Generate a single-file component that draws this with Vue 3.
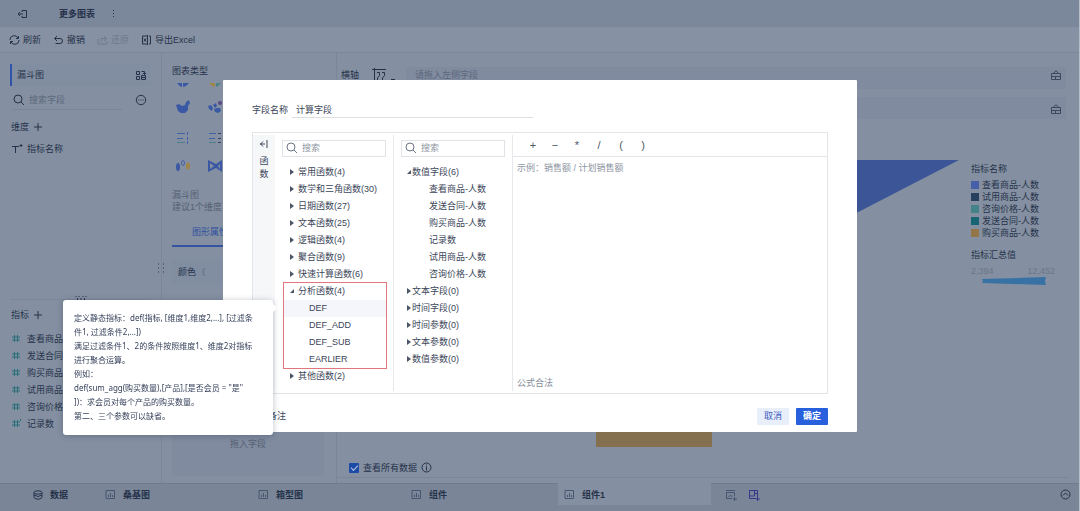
<script setup>
import { ref } from 'vue'

const metrics = ['查看商品', '发送合同-', '购买商品', '试用商品', '咨询价格', '记录数']
const groupsBefore = ['常用函数(4)', '数学和三角函数(30)', '日期函数(27)', '文本函数(25)', '逻辑函数(4)', '聚合函数(9)', '快速计算函数(6)']
const analysis = ['DEF', 'DEF_ADD', 'DEF_SUB', 'EARLIER']
const numberFields = ['查看商品-人数', '发送合同-人数', '购买商品-人数', '记录数', '试用商品-人数', '咨询价格-人数']
const fieldGroups = ['文本字段(0)', '时间字段(0)', '时间参数(0)', '文本参数(0)', '数值参数(0)']
const operators = ['+', '−', '*', '/', '(', ')']
const tabs = [
  { name: '桑基图' },
  { name: '箱型图' },
  { name: '组件' },
  { name: '组件1', active: true }
]
const legend = [
  { name: '查看商品-人数', tone: 'blue' },
  { name: '试用商品-人数', tone: 'navy' },
  { name: '咨询价格-人数', tone: 'teal' },
  { name: '发送合同-人数', tone: 'green' },
  { name: '购买商品-人数', tone: 'gold' }
]
const tipLines = [
  '定义静态指标：def(指标, [维度1,维度2,...], [过滤条',
  '件1, 过滤条件2,...])',
  '满足过滤条件1、2的条件按照维度1、维度2对指标',
  '进行聚合运算。',
  '例如：',
  'def(sum_agg(购买数量),[产品],[是否会员 = "是"',
  '])：求会员对每个产品的购买数量。',
  '第二、三个参数可以缺省。'
]
const fieldName = ref('计算字段')
const showAll = ref(true)
</script>

<template>
  <div class="app">
    <header class="titlebar">
      <button class="icon-btn" aria-label="返回">
        <svg width="11" height="10" viewBox="0 0 11 10"><path d="M5 3V1.500h4.500v7H5V7M1 5h5M3 3L1 5l2 2" /></svg>
      </button>
      <h1>更多图表</h1>
      <button class="icon-btn" aria-label="更多">
        <svg class="solid" width="3" height="10" viewBox="0 0 3 10"><rect x="1" y="1" width="1" height="1" /><rect x="1" y="4" width="1" height="1" /><rect x="1" y="7" width="1" height="1" /></svg>
      </button>
    </header>

    <nav class="toolbar">
      <button>
        <svg width="11" height="10" viewBox="0 0 11 10"><path d="M1 5a4.2 4 0 0 1 8-2M9.500 1v2.500H7M10 5a4.200 4 0 0 1-8 2M1.500 9V6.500H4" /></svg>刷新
      </button>
      <button>
        <svg width="11" height="10" viewBox="0 0 11 10"><path d="M4 1L1.500 3.500 4 6M1.500 3.500H7a2.500 2.500 0 0 1 0 5H2.500" /></svg>撤销
      </button>
      <button class="faded" disabled>
        <svg width="11" height="10" viewBox="0 0 11 10"><path d="M7 1l2.500 2.500L7 6M9.500 3.500H4v3M1 4v5h9V6" /></svg>还原
      </button>
      <button>
        <svg width="11" height="10" viewBox="0 0 11 10"><path d="M6 1H1.500v8H6M8 1h1.500v8H8M6.500 0v10M3 3.500l2 3M5 3.500l-2 3" /></svg>导出Excel
      </button>
    </nav>

    <main class="workspace">
      <aside class="fields">
        <div class="selected">
          <span>漏斗图</span>
          <svg width="10" height="10" viewBox="0 0 10 10"><path d="M.500 1.500h3v3h-3zM.500 6.500h3v3h-3zM5.500 5.500h4v4h-4zM5.500 1.500h3v3M7 3l1.500 1.500L10 3M5.500 7.500h4" /></svg>
        </div>
        <div class="find">
          <label>
            <svg width="12" height="12" viewBox="0 0 12 12"><circle cx="5" cy="5" r="4" /><path d="M8 8l3 3" /></svg>
            <input type="text" placeholder="搜索字段" aria-label="搜索字段" />
          </label>
          <button class="icon-btn" aria-label="更多选项">
            <svg width="12" height="12" viewBox="0 0 12 12"><circle cx="6" cy="6" r="4.700" /><path d="M3.300 6h1M5.500 6h1M7.700 6h1" /></svg>
          </button>
        </div>
        <h2>维度 <svg width="8" height="8" viewBox="0 0 8 8"><path d="M4 0v8M0 4h8" /></svg></h2>
        <div class="dimension">
          <svg width="12" height="10" viewBox="0 0 12 10"><path d="M0 2.500h7M3.500 2.500V9" /><path d="M9 0v3M7.500 1.500h3" /></svg>指标名称
        </div>
        <div class="splitter"><svg width="12" height="4" viewBox="0 0 12 4"><path d="M1 0v1M4 0v1M8 0v1M11 0v1M2.500 2v2M6 2v2M9.500 2v2" /></svg></div>
        <h2>指标 <svg width="8" height="8" viewBox="0 0 8 8"><path d="M4 0v8M0 4h8" /></svg></h2>
        <ul class="metrics">
          <li v-for="(m, i) in metrics" :key="m">
            <svg width="9" height="9" viewBox="0 0 9 9"><path d="M2.500 1v7M5.500 1v7M0 3h8M0 6h8" /><path v-if="i === 5" d="M8.500 0v2" /></svg>{{ m }}
          </li>
        </ul>
      </aside>

      <section class="settings">
        <svg class="grip" width="7" height="11" viewBox="0 0 7 11"><path d="M0 1h1M5 1h1M0 5h1M5 5h1M0 9h1M5 9h1" /></svg>
        <h2>图表类型</h2>
        <div class="types">
          <svg width="14" height="6" viewBox="0 0 14 6"><path class="f-blue" d="M1 1h5v4Q3 4 1 1zM7 1h6Q11 4 7 5z" /></svg>
          <svg width="14" height="6" viewBox="0 0 14 6"><path class="f-gold" d="M1 1h6v4Q3 4 1 1z" /><path class="f-teal" d="M8 1h5Q11 4 8 5z" /></svg>
          <svg width="16" height="14" viewBox="0 0 16 14"><path class="f-blue" d="M0 5l3-1 3 2 3-1 1-3 3-2 1 3-2 3 0 4-3 3-4 0-3-2z" /></svg>
          <svg width="16" height="14" viewBox="0 0 16 14"><path class="f-blue" d="M0 6l3-1 2 3-1 3-3-2zM5 5l3-2 1 3-2 2zM6 9l3-1 3 0 1 3-3 2-3-1z" /><circle class="f-purple" cx="12" cy="3" r="2" /></svg>
          <svg width="14" height="14" viewBox="0 0 14 14"><path class="s-blue" d="M1 2.500h8M1 7.500h6" /><path class="s-teal" d="M1 11.500h8" /><path class="s-blue" d="M11.500 1v3M11.500 6v3M11.500 10v3" /></svg>
          <svg width="14" height="14" viewBox="0 0 14 14"><path class="s-blue" d="M1 2.500h7M1 7.500h6" /><path class="s-teal" d="M1 11.500h7" /><path class="s-navy" d="M10 2.500h3M10 7.500h3M10 11.500h3" /></svg>
          <svg width="14" height="14" viewBox="0 0 14 14"><ellipse class="f-blue" cx="2" cy="8" rx="2" ry="4" /><ellipse class="s-blue" cx="7" cy="4" rx="1.500" ry="2.500" /><ellipse class="f-gold" cx="12" cy="7" rx="2" ry="3.500" /></svg>
          <svg width="16" height="12" viewBox="0 0 16 12"><path class="f-blue" fill-rule="evenodd" d="M0 0l8 4 6-4v12L8 8l-8 4zM2 3v6l4-3zM12 4l-2 2 2 3z" /></svg>
        </div>
        <p class="hint">漏斗图<br />建议1个维度、</p>
        <button class="tab-attr">图形属性</button>
        <div class="color-row"><span>颜色</span><svg width="6" height="8" viewBox="0 0 6 8"><path d="M4.500 1H2v6h2.500M2 4h2" /></svg><i></i></div>
        <div class="drop">拖入字段</div>
      </section>

      <section class="canvas">
        <div class="axis">
          <span class="axis-name">横轴</span>
          <svg width="24" height="14" viewBox="0 0 24 14"><path d="M0 1.500h14M2.500 0v13M5 4.500h2.500v3L5.500 10v3M10 4.500h2.500v3l-2 2.500v3" /><path d="M19 11.500h4" /></svg>
          <div class="field-box">请拖入左侧字段
            <svg width="10" height="10" viewBox="0 0 10 10"><path d="M.500 3.500h9v6h-9zM2.500 3.500q2.500-5 5 0M1 6.500h8M4.500 6v3" /></svg>
          </div>
        </div>
        <div class="axis">
          <span class="axis-name"></span>
          <div class="field-box second">
            <svg width="10" height="10" viewBox="0 0 10 10"><path d="M.500 3.500h9v6h-9zM2.500 3.500q2.500-5 5 0M1 6.500h8M4.500 6v3" /></svg>
          </div>
        </div>
        <div class="chart">
          <svg class="funnel" viewBox="0 0 622 331" preserveAspectRatio="none">
            <path class="top" d="M12 33H622L500 96H134z" />
            <path class="base" d="M259 280H375V320H259z" />
          </svg>
          <div class="legend">
            <h3>指标名称</h3>
            <ul>
              <li v-for="l in legend" :key="l.name"><i :class="l.tone"></i>{{ l.name }}</li>
            </ul>
            <h3>指标汇总值</h3>
            <div class="range"><span>2,394</span><span>12,452</span></div>
            <svg width="66" height="8" viewBox="0 0 66 8"><path d="M1 2L65 0l-1 4 1 4L1 6l1-2z" /></svg>
          </div>
        </div>
        <label class="all-data">
          <input v-model="showAll" type="checkbox" />查看所有数据
          <svg width="11" height="11" viewBox="0 0 11 11"><circle cx="5.500" cy="5.500" r="4.500" /><path d="M5.500 2.500v1M5.500 4.500v4" /></svg>
        </label>
      </section>
    </main>

    <footer class="tabbar">
      <button class="data-tab">
        <svg width="10" height="10" viewBox="0 0 10 10"><ellipse cx="5" cy="2.500" rx="4" ry="1.700" /><path d="M1 2.500v5q4 3.500 8 0v-5M1 5q4 3 8 0" /></svg>数据
      </button>
      <button v-for="t in tabs" :key="t.name" class="sheet" :class="{ active: t.active }">
        <svg width="11" height="11" viewBox="0 0 11 11"><path d="M1 1.500h8.500v8H1zM3.500 8V6M5.500 8V4M7.500 8V6" /></svg>{{ t.name }}
      </button>
      <button class="add" aria-label="添加组件">
        <svg width="12" height="12" viewBox="0 0 12 12"><path d="M1 1.500h9M1 3.500h8.500V7M1.500 3.500v6H7M3.500 8l2-2 2 2M9.500 8v4M8 10h4" /></svg>
      </button>
      <button class="add violet" aria-label="添加仪表板">
        <svg width="12" height="12" viewBox="0 0 12 12"><path d="M1 1.500h8.500V8M1.500 1v8.500H8M6.500 1v6H1M6.500 4.500h3M9.500 8v4M8 10h4" /></svg>
      </button>
      <button class="collapse" aria-label="收起">
        <svg width="11" height="11" viewBox="0 0 11 11"><circle cx="5.500" cy="5.500" r="4.500" /><path d="M3 6.500L5.500 4 8 6.500" /></svg>
      </button>
    </footer>

    <div class="layer">
      <div class="dialog" role="dialog" aria-label="计算字段">
        <div class="name-row">
          <label for="field-name">字段名称</label>
          <input id="field-name" v-model="fieldName" type="text" />
        </div>
        <div class="builder">
          <div class="strip">
            <svg width="8" height="8" viewBox="0 0 8 8"><path d="M0 4h5M3 1.500L.500 4 3 6.500M7 0v8" /></svg>
            <span>函</span><span>数</span>
          </div>
          <div class="column">
            <label class="search">
              <svg width="12" height="12" viewBox="0 0 12 12"><circle cx="5" cy="5" r="4" /><path d="M8 8l3 3" /></svg>
              <input type="text" placeholder="搜索" aria-label="搜索函数" />
            </label>
            <ul class="tree">
              <li v-for="g in groupsBefore" :key="g"><i class="arrow"></i>{{ g }}</li>
            </ul>
            <div class="marked">
              <ul class="tree">
                <li><i class="arrow open"></i>分析函数(4)</li>
                <li v-for="(a, i) in analysis" :key="a" class="leaf" :class="{ hover: i === 0 }">
                  {{ a }}
                  <div v-if="i === 0" class="tip" role="tooltip">
                    <p v-for="line in tipLines" :key="line">{{ line }}</p>
                  </div>
                </li>
              </ul>
            </div>
            <ul class="tree">
              <li><i class="arrow"></i>其他函数(2)</li>
            </ul>
          </div>
          <div class="column fields-col">
            <label class="search">
              <svg width="12" height="12" viewBox="0 0 12 12"><circle cx="5" cy="5" r="4" /><path d="M8 8l3 3" /></svg>
              <input type="text" placeholder="搜索" aria-label="搜索字段名" />
            </label>
            <ul class="tree">
              <li><i class="arrow open"></i>数值字段(6)</li>
              <li v-for="n in numberFields" :key="n" class="leaf">{{ n }}</li>
              <li v-for="f in fieldGroups" :key="f"><i class="arrow"></i>{{ f }}</li>
            </ul>
          </div>
          <div class="editor">
            <div class="ops"><button v-for="o in operators" :key="o">{{ o }}</button></div>
            <textarea placeholder="示例：销售额 / 计划销售额" aria-label="公式"></textarea>
            <p>公式合法</p>
          </div>
        </div>
        <div class="actions">
          <span>备注</span>
          <button class="cancel">取消</button>
          <button class="ok">确定</button>
        </div>
      </div>
    </div>
  </div>
</template>

<style>
body { margin: 0; }
</style>

<style scoped>
.app {
  display: flex;
  flex-direction: column;
  height: 100vh;
  box-sizing: border-box;
  border-right: 1px solid #b4bdc9;
  background: #8490a1;
  color: #26324a;
  font: 9px/12px "Liberation Sans", "Noto Sans CJK SC", sans-serif;
  overflow: hidden;
}
.app * { box-sizing: border-box; }
button, input, textarea { font: inherit; color: inherit; border: 0; background: none; padding: 0; margin: 0; outline: 0; border-radius: 0; }
button { display: flex; align-items: center; }
h1, h2, h3, p, ul { margin: 0; padding: 0; font-size: inherit; font-weight: 400; list-style: none; }
svg { display: block; flex: none; fill: none; stroke: currentColor; stroke-width: 1; }
input { min-width: 0; }
.solid { fill: currentColor; stroke: none; }

.titlebar { display: flex; align-items: center; height: 27px; padding-left: 17px; background: #7b879a; flex: none; }
.titlebar h1 { margin: 0 17px 0 31px; font-weight: 700; }
.toolbar { display: flex; align-items: center; gap: 12px; height: 26px; padding: 1px 0 0 9px; flex: none; border-bottom: 1px solid #7c889a; background: #8691a3; }
.toolbar button { gap: 3px; }
.toolbar .faded { color: #6e7a8d; }

.workspace { display: flex; flex: 1; min-height: 0; }
.fields { width: 162px; flex: none; padding: 11px 10px 0; border-right: 1px solid #7b8799; }
.selected { display: flex; align-items: center; justify-content: space-between; height: 22px; padding: 0 5px; border-left: 2px solid #2f53a8; background: #818da0; }
.find { display: flex; align-items: center; justify-content: space-between; height: 24px; padding: 0 4px 0 3px; margin-top: 2px; }
.find label { display: flex; align-items: center; gap: 4px; width: 109px; height: 20px; border-bottom: 1px solid #7a8698; }
.find input { width: 80px; }
.find input::placeholder { color: #5c687c; opacity: 1; }
.fields h2 { display: flex; align-items: center; gap: 5px; height: 14px; margin: 8px 0 0 1px; }
.dimension { display: flex; align-items: center; gap: 3px; height: 14px; margin: 8px 0 0 2px; }
.splitter { display: flex; justify-content: center; height: 4px; margin-top: 140px; border-bottom: 1px solid #7b8799; }
.metrics { margin-top: 8px; }
.metrics li { display: flex; align-items: center; gap: 6px; height: 17px; padding-left: 2px; }
.metrics svg { color: #2a6e78; }

.settings { position: relative; display: flex; flex-direction: column; width: 175px; flex: none; padding: 12px 12px 7px 10px; border-right: 1px solid #7b8799; }
.grip { position: absolute; left: -4px; top: 210px; }
.types { display: grid; grid-template-columns: 32px 32px; grid-template-rows: 10px 34px 28px 28px; align-items: center; padding-left: 4px; margin-top: 3px; }
.f-blue { fill: #3a58a4; stroke: none; }
.f-teal { fill: #4a8585; stroke: none; }
.f-gold { fill: #a08548; stroke: none; }
.f-purple { fill: #574a80; stroke: none; }
.s-blue { stroke: #4561a6; }
.s-teal { stroke: #4d7f8b; }
.s-navy { stroke: #34436b; }
.hint { margin-top: 9px; color: #566175; white-space: nowrap; }
.tab-attr { height: 28px; margin-top: 6px; padding-left: 20px; color: #2f4f9f; border-bottom: 2px solid #3553a3; }
.color-row { display: flex; align-items: center; gap: 5px; height: 24px; margin-top: 13px; padding-left: 6px; background: #818da0; }
.color-row svg { color: #68748a; }
.color-row i { width: 2px; height: 13px; margin-left: 14px; background: #4f6595; }
.drop { display: flex; flex: 1; align-items: flex-end; justify-content: center; margin-top: 120px; padding-bottom: 26px; background: #808b9f; color: #566175; }

.canvas { display: flex; flex: 1; flex-direction: column; min-width: 0; padding: 14px 10px 5px 0; }
.axis { display: flex; height: 22px; margin-bottom: 8px; padding: 0 3px 0 4px; }
.axis svg { margin: 1px 10px 0 13px; }
.axis-name { width: 18px; padding-top: 2px; white-space: nowrap; }
.field-box { display: flex; flex: 1; justify-content: space-between; padding: 2px 5px 0 9px; background: #808b9f; color: #5c687c; }
.field-box svg { margin: 1px 0 0 auto; color: #3c485e; }
.field-box.second { margin-left: 47px; align-items: center; padding-top: 0; }
.chart { display: flex; flex: 1; min-height: 0; }
.funnel { flex: 1; min-width: 0; height: 100%; stroke: none; }
.funnel .top { fill: #3c5597; }
.funnel .base { fill: #84704f; }
.legend { width: 98px; flex: none; margin-left: 12px; padding-top: 36px; }
.legend h3 { height: 16px; }
.legend ul { margin-bottom: 10px; }
.legend li { display: flex; align-items: center; gap: 3px; height: 12px; }
.legend i { width: 8px; height: 8px; flex: none; }
.blue { background: #465fa7; }
.navy { background: #28405f; }
.teal { background: #438286; }
.green { background: #176572; }
.gold { background: #927648; }
.range { display: flex; justify-content: space-between; width: 84px; color: #69758a; }
.legend svg { margin-left: 10px; fill: #3872a4; stroke: none; }
.all-data { display: flex; align-items: center; gap: 4px; height: 20px; padding-left: 12px; border-bottom: 1px solid #7b8799; }
.all-data input { position: relative; appearance: none; width: 10px; height: 10px; border-radius: 1px; background: #1d4ba8; }
.all-data input:checked::after { content: ""; position: absolute; left: 2px; top: 2px; width: 6px; height: 3px; border: solid #b9c6de; border-width: 0 0 1px 1px; transform: rotate(-45deg); }

.tabbar { display: flex; height: 28px; flex: none; padding-bottom: 6px; border-top: 1px solid #707c8e; background: #7a8698; font-weight: 700; }
.data-tab { gap: 7px; width: 99px; padding-left: 33px; }
.sheet { gap: 7px; width: 153px; padding-left: 6px; }
.sheet svg, .add svg { color: #465570; }
.sheet.active { margin: -1px 14px 0 0; padding-top: 1px; background: #8490a1; }
.add { margin-right: 11px; }
.add.violet svg { color: #36388a; }
.collapse { margin: 0 8px 0 auto; }

.layer { position: fixed; inset: 0; display: flex; align-items: center; justify-content: center; }
.dialog { width: 634px; max-width: 95%; padding: 22px 29px 7px; background: #fff; border-radius: 1px; color: #3b4659; }
.name-row { display: flex; align-items: center; gap: 4px; height: 16px; }
.name-row input { width: 241px; height: 16px; padding-left: 4px; border-bottom: 1px solid #dcdfe4; color: #3b4659; }
.builder { display: flex; height: 262px; margin-top: 14px; padding: 2px 0; border: 1px solid #e3e5e9; }
.strip { display: flex; flex-direction: column; align-items: center; width: 22px; flex: none; padding-top: 5px; background: #f6f7f9; }
.strip svg { margin-bottom: 7px; }
.strip span { height: 13px; }
.column { width: 119px; flex: none; padding: 5px 7px; border-right: 1px solid #e6e8ec; }
.search { display: flex; align-items: center; gap: 4px; height: 17px; margin-bottom: 7px; padding: 0 3px; border: 1px solid #dfe2e7; }
.search svg { color: #6c7686; }
.search input { width: 80px; }
.search input::placeholder, textarea::placeholder { color: #8e96a3; opacity: 1; }
.tree li { position: relative; display: flex; align-items: center; height: 17px; padding-left: 8px; white-space: nowrap; }
.tree .leaf { padding-left: 26px; }
.arrow { width: 4px; height: 6px; margin-right: 4px; background: #4b5567; clip-path: polygon(0 0, 100% 50%, 0 100%); }
.arrow.open { height: 4px; clip-path: polygon(100% 0, 100% 100%, 0 100%); }
.marked { margin-left: 2px; outline: 1px solid #e0767e; }
.marked .tree li { padding-left: 6px; }
.marked .tree .leaf { padding-left: 25px; }
.marked .tree .hover { background: #f4f6fb; }
.fields-col .tree li { padding-left: 6px; }
.fields-col .tree .leaf { padding-left: 28px; }
.fields-col .arrow { margin-right: 1px; }
.editor { display: flex; flex: 1; flex-direction: column; min-width: 0; }
.ops { display: flex; height: 22px; padding-left: 9px; border-bottom: 1px solid #e3e5e9; }
.ops button { justify-content: center; width: 22px; color: #4e5869; font-size: 11px; }
.editor textarea { flex: 1; padding: 5px 4px; resize: none; }
.editor p { height: 14px; padding: 0 4px; color: #858d9a; }
.actions { display: flex; align-items: center; gap: 7px; margin-top: 14px; }
.actions span { flex: 1; padding-left: 16px; }
.actions button { justify-content: center; width: 32px; height: 17px; border-radius: 1px; }
.cancel { background: #e9eefb; color: #3d60bd; }
.actions .ok { background: #285fdc; color: #fff; font-weight: 700; }

.tip { position: absolute; z-index: 2; right: calc(100% + 11px); top: 0; width: 210px; padding: 11px 8px 12px 11px; border-radius: 3px; background: #fff; box-shadow: 0 1px 6px rgba(30, 42, 66, 0.3); font: 8px/14px "Noto Sans", "Noto Sans CJK SC", sans-serif; color: #35415a; }
.tip::after { content: ""; position: absolute; right: -4px; top: 4px; border: solid transparent; border-width: 4px 0 4px 4px; border-left-color: #fff; }
</style>
